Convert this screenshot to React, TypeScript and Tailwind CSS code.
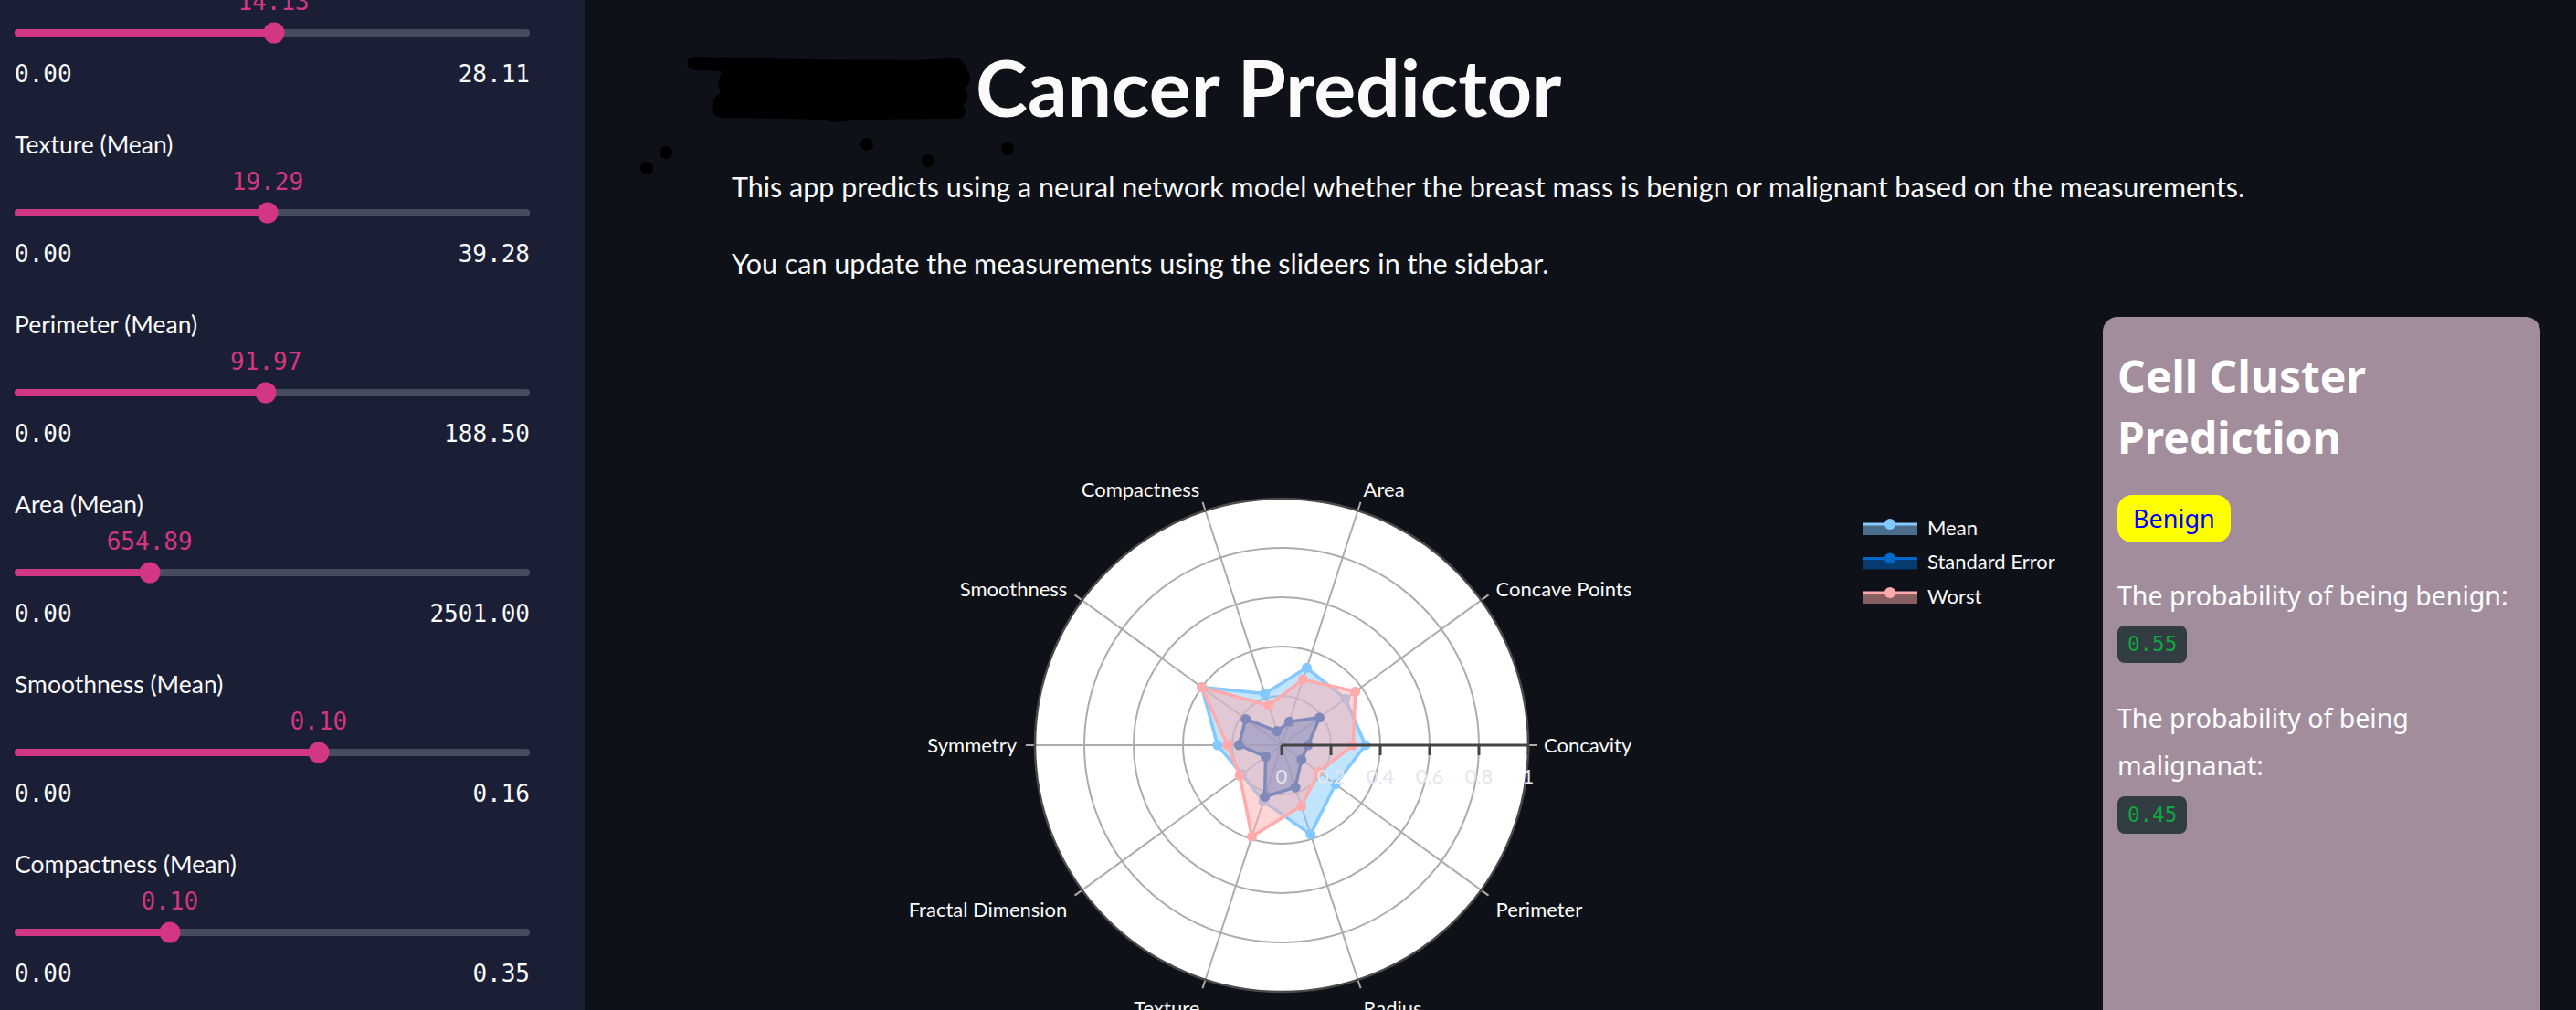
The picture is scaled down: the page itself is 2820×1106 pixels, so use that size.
import React from "react";

const sliders = [
  { label: "Radius (Mean)", value: "14.13", max: "28.11", f: 0.5027 },
  { label: "Texture (Mean)", value: "19.29", max: "39.28", f: 0.491 },
  { label: "Perimeter (Mean)", value: "91.97", max: "188.50", f: 0.488 },
  { label: "Area (Mean)", value: "654.89", max: "2501.00", f: 0.2618 },
  { label: "Smoothness (Mean)", value: "0.10", max: "0.16", f: 0.59 },
  { label: "Compactness (Mean)", value: "0.10", max: "0.35", f: 0.301 },
  { label: "Concavity (Mean)", value: "0.09", max: "0.43", f: 0.2 },
];

function Slider({ label, value, max, f }: { label: string; value: string; max: string; f: number }) {
  const pct = `${f * 100}%`;
  return (
    <div className="h-[197px] flex flex-col">
      <div className="h-[40px] flex items-center text-[26.5px] text-[#fafafa] font-['Lato',sans-serif]">{label}</div>
      <div className="relative h-[68px]">
        <span
          className="absolute top-0 h-[40px] leading-[40px] -translate-x-1/2 whitespace-nowrap text-[#d33682] text-[26px] font-['DejaVu_Sans_Mono',monospace]"
          style={{ left: pct }}
        >
          {value}
        </span>
        <div className="absolute left-0 right-0 top-[50px] h-[8px] rounded-full bg-[#484c5f]">
          <div className="h-full rounded-full bg-[#d33682]" style={{ width: pct }} />
          <div
            className="absolute top-1/2 w-[23px] h-[23px] -translate-x-1/2 -translate-y-1/2 rounded-full bg-[#d33682]"
            style={{ left: pct }}
          />
        </div>
      </div>
      <div className="h-[62px] flex items-center justify-between text-[26px] text-[#fafafa] font-['DejaVu_Sans_Mono',monospace]">
        <span>0.00</span>
        <span>{max}</span>
      </div>
    </div>
  );
}

const cats = [
  { name: "Concavity", a: 0 },
  { name: "Concave Points", a: 36 },
  { name: "Area", a: 72 },
  { name: "Compactness", a: 108 },
  { name: "Smoothness", a: 144 },
  { name: "Symmetry", a: 180 },
  { name: "Fractal Dimension", a: 216 },
  { name: "Texture", a: 252 },
  { name: "Radius", a: 288 },
  { name: "Perimeter", a: 324 },
];

const traces = [
  { name: "Mean", color: "#83c9ff", v: [0.34, 0.32, 0.33, 0.22, 0.4, 0.26, 0.2, 0.24, 0.38, 0.27] },
  { name: "Standard Error", color: "#0068c9", v: [0.107, 0.19, 0.1, 0.06, 0.18, 0.173, 0.08, 0.22, 0.18, 0.1] },
  { name: "Worst", color: "#ffabab", v: [0.29, 0.37, 0.28, 0.17, 0.4, 0.22, 0.21, 0.39, 0.26, 0.185] },
];

const CX = 602;
const CY = 469;
const R = 270;

function pt(r: number, deg: number) {
  const t = (deg * Math.PI) / 180;
  return [CX + r * Math.cos(t), CY - r * Math.sin(t)];
}

function RadarChart() {
  return (
    <svg width="1469" height="759" viewBox="0 0 1469 759" className="block overflow-visible">
      <circle cx={CX} cy={CY} r={R} fill="#ffffff" />
      {[0.2, 0.4, 0.6, 0.8].map((g) => (
        <circle key={g} cx={CX} cy={CY} r={R * g} fill="none" stroke="#acacac" strokeWidth="2" />
      ))}
      {cats.map((c) => {
        const [x1, y1] = pt(0, c.a);
        const [x2, y2] = pt(R + 10, c.a);
        return <line key={c.name} x1={x1} y1={y1} x2={x2} y2={y2} stroke="#acacac" strokeWidth="2" />;
      })}
      <circle cx={CX} cy={CY} r={R} fill="none" stroke="#4a4a4a" strokeWidth="2.5" />
      {traces.map((tr) => {
        const pts = tr.v.map((v, i) => pt(v * R, cats[i].a));
        const d = pts.map((p) => `${p[0].toFixed(1)},${p[1].toFixed(1)}`).join(" ");
        return (
          <g key={tr.name}>
            <polygon points={d} fill={tr.color} fillOpacity="0.5" stroke="none" />
            <polygon points={d} fill="none" stroke={tr.color} strokeWidth="3.5" strokeLinejoin="round" />
            {pts.map((p, i) => (
              <circle key={i} cx={p[0]} cy={p[1]} r="5.5" fill={tr.color} />
            ))}
          </g>
        );
      })}
      <line x1={CX} y1={CY} x2={CX + R} y2={CY} stroke="#444444" strokeWidth="3" />
      {[0, 0.2, 0.4, 0.6, 0.8, 1].map((t) => (
        <g key={t}>
          <line x1={CX + R * t} y1={CY} x2={CX + R * t} y2={CY + 11} stroke="#444444" strokeWidth="3" />
          <text
            x={CX + R * t}
            y={CY + 33}
            textAnchor="middle"
            dominantBaseline="central"
            fill="#e2e6ee"
            fontSize="22"
            fontFamily="Lato, sans-serif"
          >
            {t === 0 ? "0" : t === 1 ? "1" : String(t)}
          </text>
        </g>
      ))}
      {cats.map((c) => {
        const t = (c.a * Math.PI) / 180;
        const cs = Math.cos(t);
        const sn = Math.sin(t);
        const [x, y] = pt(R + 20, c.a);
        const anchor = cs > 0.1 ? "start" : cs < -0.1 ? "end" : "middle";
        const dy = sn > 0.9 ? -5 : sn < -0.9 ? 12 : sn < -0.1 ? 9 : -1;
        return (
          <text
            key={c.name}
            x={x - (cs > 0.9 ? 3 : 0)}
            y={y + dy}
            textAnchor={anchor}
            dominantBaseline="central"
            fill="#fafafa"
            fontSize="22"
            fontFamily="Lato, sans-serif"
          >
            {c.name}
          </text>
        );
      })}
      {traces.map((tr, i) => {
        const y = 227 + i * 37.5;
        return (
          <g key={tr.name}>
            <rect x="1238" y={y} width="60" height="12" fill={tr.color} fillOpacity="0.5" />
            <line x1="1238" y1={y} x2="1298" y2={y} stroke={tr.color} strokeWidth="3" />
            <circle cx="1268" cy={y} r="6" fill={tr.color} />
            <text x="1309" y={y + 3} dominantBaseline="central" fill="#fafafa" fontSize="22" fontFamily="Lato, sans-serif">
              {tr.name}
            </text>
          </g>
        );
      })}
    </svg>
  );
}

function Scribble() {
  return (
    <svg width="420" height="160" viewBox="0 0 420 160" className="absolute left-[-101px] top-[-5px] pointer-events-none">
      <path
        d="M53 27 Q50 37 62 37 L90 38 Q84 52 89 61 Q77 70 80 81 Q82 91 102 89 L205 91 Q217 97 228 91 L352 90 Q361 83 354 76 Q364 66 356 58 Q367 46 359 37 Q353 20 338 24 L300 26 L180 25 L62 22 Q51 22 53 27 Z"
        fill="#000000"
      />
      <circle cx="8" cy="144" r="7" fill="#000000" />
      <circle cx="29" cy="127" r="7" fill="#000000" />
      <circle cx="249" cy="118" r="7" fill="#000000" />
      <circle cx="316" cy="136" r="7" fill="#000000" />
      <circle cx="403" cy="123" r="7" fill="#000000" />
    </svg>
  );
}

export default function App() {
  return (
    <div className="flex w-[2820px] h-[1106px] overflow-hidden bg-[#0e1117]">
      <aside className="w-[640px] shrink-0 h-full overflow-hidden bg-[#1b1f35]">
        <div className="pl-[16px] pr-[60px] mt-[-58px]">
          {sliders.map((s) => (
            <Slider key={s.label} {...s} />
          ))}
        </div>
      </aside>
      <main className="flex-1 min-w-0 h-full pl-[161px] pr-[39px] pt-[45px] text-[#fafafa] font-['Lato',sans-serif]">
        <h1 className="relative h-[100px] leading-[100px] text-[86px] font-bold whitespace-nowrap">
          <span className="inline-block w-[267px] text-black overflow-hidden align-top">Breast</span>
          <span>Cancer Predictor</span>
          <Scribble />
        </h1>
        <p className="mt-[37px] h-[44px] leading-[44px] text-[30.5px] whitespace-nowrap">
          This app predicts using a neural network model whether the breast mass is benign or malignant based on the measurements.
        </p>
        <p className="mt-[40px] h-[44px] leading-[44px] text-[30.5px] whitespace-nowrap">
          You can update the measurements using the slideers in the sidebar.
        </p>
        <div className="mt-[37px] flex gap-[32px]">
          <div className="flex-1 min-w-0">
            <RadarChart />
          </div>
          <div className="w-[479px] shrink-0 h-[820px] rounded-[16px] bg-[#a28d9d] px-[16px] pt-[31px] font-['Noto_Sans',sans-serif] text-white">
            <h2 className="text-[48px] leading-[67px] font-bold">Cell Cluster Prediction</h2>
            <div className="mt-[30px] inline-flex h-[52px] items-center rounded-[16px] bg-[#ffff00] px-[17px] text-[27px] text-[#0000ff]">
              Benign
            </div>
            <p className="mt-[32px] text-[28.5px] leading-[52px]">The probability of being benign:</p>
            <div className="mt-[7px] inline-flex h-[41px] items-center rounded-[8px] bg-[#313c43] px-[11px] text-[22.5px] text-[#10a73f] font-['DejaVu_Sans_Mono',monospace]">
              0.55
            </div>
            <p className="mt-[34px] text-[28.5px] leading-[52px]">The probability of being malignanat:</p>
            <div className="mt-[8px] inline-flex h-[41px] items-center rounded-[8px] bg-[#313c43] px-[11px] text-[22.5px] text-[#10a73f] font-['DejaVu_Sans_Mono',monospace]">
              0.45
            </div>
          </div>
        </div>
      </main>
    </div>
  );
}
